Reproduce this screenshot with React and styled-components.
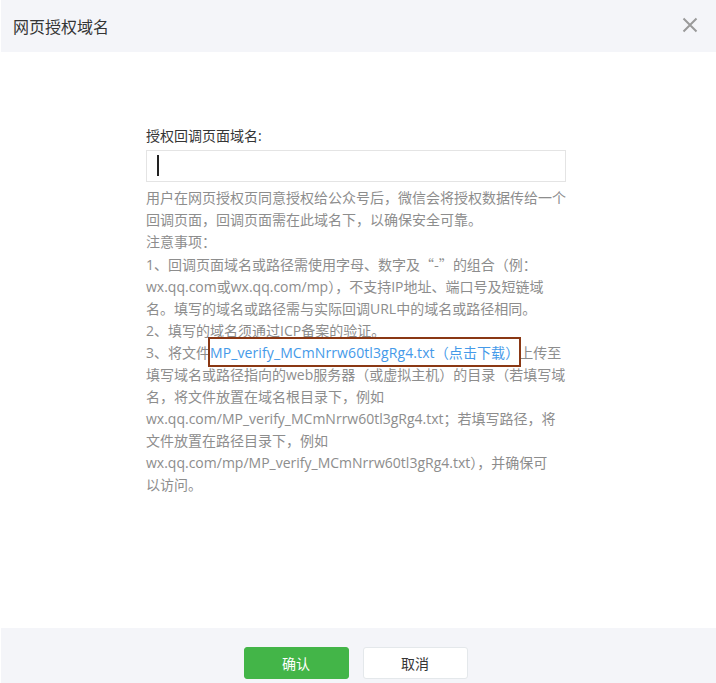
import React from 'react';
import styled, { createGlobalStyle } from 'styled-components';

const GlobalStyle = createGlobalStyle`
  html, body {
    margin: 0;
    padding: 0;
    background: #fff;
  }
  body {
    font-family: "Open Sans", "Noto Sans CJK SC", sans-serif;
  }
`;

const lines = [
  '用户在网页授权页同意授权给公众号后，微信会将授权数据传给一个',
  '回调页面，回调页面需在此域名下，以确保安全可靠。',
  '注意事项：',
  'QUOTE',
  'wx.qq.com或wx.qq.com/mp），不支持IP地址、端口号及短链域',
  '名。填写的域名或路径需与实际回调URL中的域名或路径相同。',
  '2、填写的域名须通过ICP备案的验证。',
  'LINK',
  '填写域名或路径指向的web服务器（或虚拟主机）的目录（若填写域',
  '名，将文件放置在域名根目录下，例如',
  'wx.qq.com/MP_verify_MCmNrrw60tl3gRg4.txt；若填写路径，将',
  '文件放置在路径目录下，例如',
  'wx.qq.com/mp/MP_verify_MCmNrrw60tl3gRg4.txt），并确保可',
  '以访问。'
];

function renderLine(line, i) {
  if (line === 'LINK') {
    return (
      <Line key={i}>
        3、将文件<Link href="#">MP_verify_MCmNrrw60tl3gRg4.txt（点击下载）</Link>上传至
      </Line>
    );
  }
  if (line === 'QUOTE') {
    return (
      <Line key={i}>
        1、回调页面域名或路径需使用字母、数字及<Cjk>“-”</Cjk>的组合（例：
      </Line>
    );
  }
  return <Line key={i}>{line}</Line>;
}

function App() {
  return (
    <>
      <GlobalStyle />
      <Dialog>
        <Header>
          <Title>网页授权域名</Title>
          <Close aria-label="关闭">
            <svg width="16" height="16" viewBox="0 0 16 16">
              <path d="M1.5 1.5 L14.5 14.5 M14.5 1.5 L1.5 14.5" stroke="#9a9a9a" strokeWidth="2" fill="none" />
            </svg>
          </Close>
        </Header>
        <Body>
          <Form>
            <Label>授权回调页面域名:</Label>
            <InputWrap>
              <Input type="text" />
              <Caret />
            </InputWrap>
            <Tips>{lines.map(renderLine)}</Tips>
          </Form>
        </Body>
        <Footer>
          <Button primary>确认</Button>
          <Button>取消</Button>
        </Footer>
      </Dialog>
    </>
  );
}

export default App;

const Dialog = styled.div`
  width: 716px;
  height: 683px;
  overflow: hidden;
  display: flex;
  flex-direction: column;
  border-left: 1px solid #fff;
  box-sizing: border-box;
`;

const Header = styled.div`
  height: 52px;
  flex: none;
  background: #f4f5f9;
  display: flex;
  align-items: center;
  justify-content: space-between;
  padding: 0 18px 0 12px;
`;

const Title = styled.h3`
  margin: 0;
  font-size: 16px;
  font-weight: normal;
  color: #353535;
  font-family: "Noto Sans CJK SC", sans-serif;
`;

const Close = styled.button`
  border: 0;
  background: none;
  padding: 0;
  width: 16px;
  height: 16px;
  display: flex;
  cursor: pointer;
  margin-top: -2px;
`;

const Body = styled.div`
  height: 576px;
  flex: none;
  padding-top: 73px;
  box-sizing: border-box;
`;

const Form = styled.div`
  width: 420px;
  margin-left: 145px;
  display: flex;
  flex-direction: column;
`;

const Label = styled.label`
  font-size: 14px;
  line-height: 22px;
  color: #353535;
  margin-bottom: 3px;
`;

const InputWrap = styled.div`
  position: relative;
`;

const Input = styled.input`
  width: 100%;
  height: 32px;
  box-sizing: border-box;
  border: 1px solid #e4e4e4;
  outline: none;
  padding: 0 10px;
  font-size: 14px;
  background: #fff;
`;

const Caret = styled.span`
  position: absolute;
  left: 11px;
  top: 5px;
  width: 2px;
  height: 21px;
  background: #222;
`;

const Tips = styled.div`
  margin-top: 5px;
  font-size: 14px;
  line-height: 22px;
  color: #8d8d8d;
`;

const Line = styled.div`
  white-space: nowrap;
`;

const Cjk = styled.span`
  font-family: "Noto Sans CJK SC", sans-serif;
`;

const Link = styled.a`
  position: relative;
  color: #459ae9;
  text-decoration: none;
  letter-spacing: 0.1px;
  &::after {
    content: '';
    position: absolute;
    left: -2px;
    right: -2px;
    top: -6px;
    bottom: -5px;
    border: 2px solid #8a3814;
    pointer-events: none;
  }
`;

const Footer = styled.div`
  flex: 1;
  background: #f4f5f9;
  display: flex;
  justify-content: center;
  align-items: flex-start;
  gap: 14px;
  padding: 19px 6px 0 0;
`;

const Button = styled.button`
  width: 105px;
  height: 32px;
  border-radius: 3px;
  font-size: 14px;
  font-family: "Noto Sans CJK SC", sans-serif;
  cursor: pointer;
  border: 1px solid ${p => (p.primary ? '#43b548' : '#e4e8eb')};
  background: ${p => (p.primary ? '#43b548' : '#fff')};
  color: ${p => (p.primary ? '#fff' : '#353535')};
`;
